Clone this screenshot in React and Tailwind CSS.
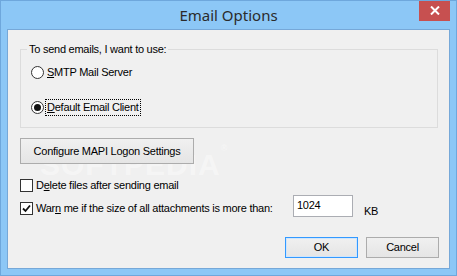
import React from "react";

const font = { fontFamily: '"Liberation Sans", Arial, sans-serif' };

const Radio = ({ checked, children, focused }) => (
    <div className="flex items-center h-[17px]">
        <span className="w-[13px] h-[13px] rounded-full border border-[#333] bg-white flex items-center justify-center">
            {checked && <span className="w-[7px] h-[7px] rounded-full bg-[#111]" />}
        </span>
        <span
            className={
                "ml-[2px] px-[1px] leading-[15px] " +
                (focused ? "outline outline-1 outline-dotted outline-black" : "")
            }
        >
            {children}
        </span>
    </div>
);

const Checkbox = ({ checked, children }) => (
    <div className="flex items-center h-[15px] whitespace-nowrap">
        <span className="w-[13px] h-[13px] shrink-0 border border-[#333] bg-white flex items-center justify-center">
            {checked && (
                <svg width="9" height="9" viewBox="0 0 9 9">
                    <path d="M1 4.5 L3.5 7 L8 1.5" fill="none" stroke="#111" strokeWidth="1.8" />
                </svg>
            )}
        </span>
        <span className="ml-[3px]">{children}</span>
    </div>
);

const Button = ({ children, primary, className }) => (
    <div
        className={
            "flex items-center justify-center border bg-gradient-to-b from-[#f0f0f0] to-[#e5e5e5] " +
            (primary ? "border-[#3399ff] shadow-[inset_0_0_0_1px_#cfe6fd] " : "border-[#acacac] ") +
            className
        }
    >
        {children}
    </div>
);

export default function App() {
    return (
        <div
            className="relative w-[457px] h-[276px] bg-[#8cc7f6] border border-[#6ea7dc] flex flex-col text-[11px] tracking-[-0.25px] text-black overflow-hidden"
            style={font}
        >
            {/* title bar */}
            <div className="h-[28px] flex items-center justify-center tracking-normal">
                <span className="text-[15px] text-[#2b2b2b] mt-[1px]" style={{ fontFamily: '"Noto Sans", "Open Sans", sans-serif' }}>
                    Email Options
                </span>
            </div>
            <div className="absolute top-[-1px] right-[6px] w-[31px] h-[21px] bg-[#c75050] flex items-center justify-center">
                <svg width="10" height="9" viewBox="0 0 10 9">
                    <path d="M1 0.5 L9 8.5 M9 0.5 L1 8.5" stroke="#fff" strokeWidth="2" />
                </svg>
            </div>

            {/* client area */}
            <div className="relative mx-[6px] h-[240px] bg-[#f0f0f0] border border-[#76a8d8] pl-[12px] pr-[11px] pt-[19px]">
                <div className="absolute left-[32px] top-[112px] text-[30px] font-bold tracking-[1px] text-white/40 pointer-events-none select-none">
                    SOFTPEDIA<span className="text-[9px] align-top">®</span>
                </div>

                <div className="relative h-[79px] border border-[#dcdcdc] pl-[10px] pt-[14px]">
                    <span className="absolute left-[6px] top-[-8px] bg-[#f0f0f0] px-[2px] leading-[14px]">
                        To send emails, I want to use:
                    </span>
                    <Radio>
                        <span className="underline">S</span>MTP Mail Server
                    </Radio>
                    <div className="mt-[18px]">
                        <Radio checked focused>
                            <span className="underline">D</span>efault Email Client
                        </Radio>
                    </div>
                </div>

                <Button className="relative mt-[10px] w-[174px] h-[26px]">Configure MAPI Logon Settings</Button>

                <div className="mt-[14px]">
                    <Checkbox>
                        D<span className="underline">e</span>lete files after sending email
                    </Checkbox>
                </div>
                <div className="mt-[2px] flex items-start">
                    <div className="w-[273px] mt-[6px]">
                        <Checkbox checked>
                            War<span className="underline">n</span> me if the size of all attachments is more than:
                        </Checkbox>
                    </div>
                    <div className="w-[60px] h-[22px] bg-white border border-[#abadb3] px-[3px] pt-[2px] leading-[14px]">
                        1024
                    </div>
                    <span className="ml-[11px] mt-[9px] leading-[14px]">KB</span>
                </div>

                <div className="mt-[19px] flex justify-end gap-[8px] mr-[-1px]">
                    <Button primary className="w-[73px] h-[21px]">OK</Button>
                    <Button className="w-[73px] h-[21px]">Cancel</Button>
                </div>
            </div>
        </div>
    );
}
